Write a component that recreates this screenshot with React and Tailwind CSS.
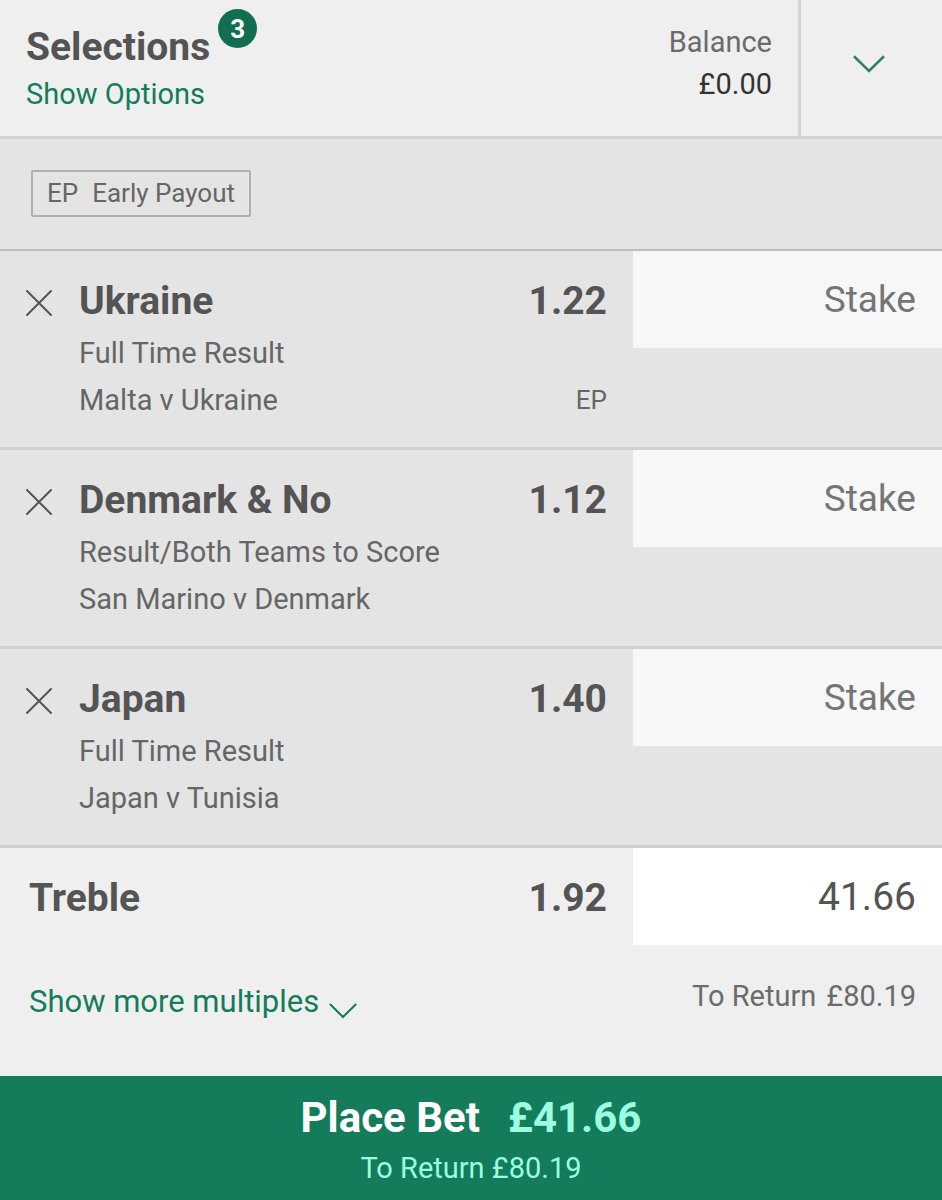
import { useState } from "react";

const initialSelections = [
  { id: "ukraine", name: "Ukraine", odds: "1.22", market: "Full Time Result", fixture: "Malta v Ukraine", earlyPayout: true },
  { id: "denmark", name: "Denmark & No", odds: "1.12", market: "Result/Both Teams to Score", fixture: "San Marino v Denmark", earlyPayout: false },
  { id: "japan", name: "Japan", odds: "1.40", market: "Full Time Result", fixture: "Japan v Tunisia", earlyPayout: false },
];

function Chevron({ className, strokeWidth }) {
  return (
    <svg viewBox="0 0 32 18" fill="none" stroke="currentColor" strokeWidth={strokeWidth} className={className} aria-hidden="true">
      <path d="M1 1.2 16 16 31 1.2" />
    </svg>
  );
}

function Cross() {
  return (
    <svg viewBox="0 0 28 28" fill="none" stroke="currentColor" strokeWidth="2" strokeLinecap="round" className="size-7" aria-hidden="true">
      <path d="M2 2 26 26M26 2 2 26" />
    </svg>
  );
}

function Header({ count }) {
  return (
    <header className="flex border-b-3 border-[#d3d3d3]">
      <div className="flex flex-1 justify-between px-[26px]">
        <div className="pt-6 pb-[18px]">
          <h1 className="relative w-fit text-[39px] leading-[47px] font-bold text-[#545454]">
            Selections
            <span className="absolute -top-[15px] left-full ml-2 flex size-[39px] items-center justify-center rounded-full bg-[#126e51] text-[26px] leading-none text-white">
              {count}
            </span>
          </h1>
          <a href="#options" className="block text-[29px] leading-[47px] text-[#147b5b]">Show Options</a>
        </div>
        <div className="pt-[21px] text-right text-[29px] leading-[42px] text-[#6b6b6b]">
          <p>Balance</p>
          <p className="text-[#333]">£0.00</p>
        </div>
      </div>
      <button type="button" aria-label="Collapse bet slip" className="flex w-36 items-center justify-center border-l-3 border-[#d3d3d3] pr-1.5 pb-2 text-[#3b7c66]">
        <Chevron className="w-8" strokeWidth="2.6" />
      </button>
    </header>
  );
}

function SelectionRow({ item, onRemove }) {
  return (
    <li className="flex border-b-3 border-[#d0d0d0] bg-[#e4e4e4]">
      <button type="button" aria-label={`Remove ${item.name}`} onClick={onRemove} className="mt-[38px] ml-[25px] size-7 shrink-0 text-[#545454]">
        <Cross />
      </button>
      <div className="flex-1 px-[26px] pt-[22px] pb-[23px] text-[29px] leading-[47px] text-[#666]">
        <div className="flex justify-between text-[39px] leading-[57px] font-bold text-[#545454]">
          <h2>{item.name}</h2>
          <span>{item.odds}</span>
        </div>
        <p>{item.market}</p>
        <div className="flex justify-between">
          <p>{item.fixture}</p>
          {item.earlyPayout && <span className="text-[26px]">EP</span>}
        </div>
      </div>
      <input
        type="text"
        inputMode="decimal"
        placeholder="Stake"
        aria-label={`Stake for ${item.name}`}
        className="h-[97px] w-[309px] bg-[#f7f7f7] pr-[26px] text-right text-[37px] text-[#545454] outline-none placeholder:text-[#757575]"
      />
    </li>
  );
}

export default function App() {
  const [selections, setSelections] = useState(initialSelections);
  const [stake, setStake] = useState("41.66");

  return (
    <main className="bg-[#efefef] font-[Roboto,sans-serif]">
      <Header count={selections.length} />

      <div className="border-b-2 border-[#bebebe] bg-[#e4e4e4] px-[31px] pt-[31px] pb-8">
        <p className="flex w-fit gap-3.5 rounded-xs border-2 border-[#afafaf] px-3.5 text-[26px] leading-[43px] text-[#666]">
          <span>EP</span>
          <span>Early Payout</span>
        </p>
      </div>

      <ul>
        {selections.map((item) => (
          <SelectionRow
            key={item.id}
            item={item}
            onRemove={() => setSelections(selections.filter((s) => s.id !== item.id))}
          />
        ))}
      </ul>

      <section>
        <div className="flex items-center">
          <label htmlFor="treble" className="flex flex-1 justify-between pt-1 pr-[26px] pl-[29px] text-[39px] leading-[57px] font-bold text-[#545454]">
            <span>Treble</span>
            <span>1.92</span>
          </label>
          <input
            id="treble"
            type="text"
            inputMode="decimal"
            value={stake}
            onChange={(e) => setStake(e.target.value)}
            className="h-[97px] w-[309px] bg-white pr-[26px] text-right text-[39px] text-[#545454] outline-none"
          />
        </div>
        <div className="flex items-start justify-between pt-[30px] pr-[26px] pb-[49px] pl-[29px]">
          <button type="button" className="flex items-end gap-2.5 pt-0.5 text-[31px] leading-[50px] text-[#147b5b]">
            Show more multiples
            <Chevron className="mb-2 w-7" strokeWidth="2.4" />
          </button>
          <p className="flex gap-2.5 text-[29px] leading-[42px] text-[#6b6b6b]">
            <span>To Return</span>
            <span>£80.19</span>
          </p>
        </div>
      </section>

      <button type="button" className="block w-full bg-[#147b5b] pt-[17px] pb-[7px] text-center text-[#9cfde0]">
        <span className="flex justify-center gap-7 text-[42px] leading-[50px] font-bold">
          <span className="text-white">Place Bet</span>
          <span>£41.66</span>
        </span>
        <span className="block text-[29px] leading-[50px]">To Return £80.19</span>
      </button>
    </main>
  );
}
